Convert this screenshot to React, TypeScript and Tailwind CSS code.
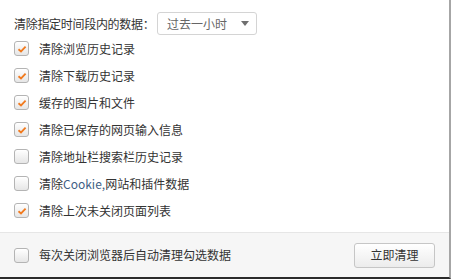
import { useState } from "react";

const items = [
  { label: "清除浏览历史记录", checked: true },
  { label: "清除下载历史记录", checked: true },
  { label: "缓存的图片和文件", checked: true },
  { label: "清除已保存的网页输入信息", checked: true },
  { label: "清除地址栏搜索栏历史记录", checked: false },
  { label: "cookie", checked: false },
  { label: "清除上次未关闭页面列表", checked: true },
];

function Checkbox({ checked, onClick }: { checked: boolean; onClick: () => void }) {
  return (
    <button
      type="button"
      onClick={onClick}
      className="flex h-[15px] w-[15px] shrink-0 items-center justify-center rounded-[3px] border border-[#b4b4b4] bg-gradient-to-b from-white to-[#e6e6e6] shadow-[inset_0_1px_0_#fff]"
    >
      {checked && (
        <svg width="10" height="8" viewBox="0 0 10 8" className="mt-[1px]">
          <path d="M1.5 4.2 L4 6.4 L8.6 1.6" fill="none" stroke="#f17a1e" strokeWidth="1.8" />
        </svg>
      )}
    </button>
  );
}

export default function App() {
  const [state, setState] = useState(items.map((i) => i.checked));
  const [auto, setAuto] = useState(false);

  return (
    <div
      className="flex h-[279px] w-[451px] flex-col border-r-2 border-b-2 border-r-[#a6a6a6] border-b-[#2b2b2b] bg-white text-[12px] text-[#333]"
      style={{ fontFamily: '"Noto Sans CJK SC", "Liberation Sans", sans-serif' }}
    >
      <div className="flex-1 px-[14px] pt-[12px]">
        <div className="flex h-[23px] items-center">
          <span className="w-[143px] shrink-0 whitespace-nowrap tracking-[-0.3px]">清除指定时间段内的数据：</span>
          <div className="flex h-[23px] w-[100px] items-center justify-between rounded-[3px] border border-[#d4d4d4] bg-white pl-[9px] pr-[7px] text-[#666]">
            <span>过去一小时</span>
            <svg width="8" height="5" viewBox="0 0 8 5">
              <path d="M0 0 H8 L4 5 Z" fill="#6f6f6f" />
            </svg>
          </div>
        </div>

        <div className="flex flex-col">
          {items.map((item, i) => (
            <div key={i} className="flex h-[27px] items-center gap-[10px]">
              <Checkbox
                checked={state[i]}
                onClick={() => setState(state.map((v, j) => (j === i ? !v : v)))}
              />
              {item.label === "cookie" ? (
                <span>
                  清除<span className="text-[#3f5f86]">Cookie,</span>网站和插件数据
                </span>
              ) : (
                <span>{item.label}</span>
              )}
            </div>
          ))}
        </div>
      </div>

      <div className="flex h-[45px] items-center justify-between border-t border-[#e6e6e6] bg-[#f6f6f6] pl-[14px] pr-[14px]">
        <div className="flex items-center gap-[10px]">
          <Checkbox checked={auto} onClick={() => setAuto(!auto)} />
          <span>每次关闭浏览器后自动清理勾选数据</span>
        </div>
        <button
          type="button"
          className="h-[25px] w-[81px] rounded-[3px] border border-[#c6c6c6] bg-gradient-to-b from-white to-[#ececec] text-[#333]"
        >
          立即清理
        </button>
      </div>
    </div>
  );
}
